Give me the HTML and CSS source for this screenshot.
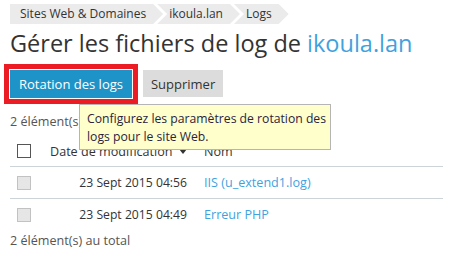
FILE: index.html
```html
<!DOCTYPE html>
<html lang="fr">
<head>
<meta charset="utf-8">
<title>Logs</title>
<link rel="stylesheet" href="styles.css">
</head>
<body>
<div class="page">
  <nav class="crumbs">
    <span class="crumb first">Sites Web &amp; Domaines</span>
    <span class="crumb">ikoula.lan</span>
    <span class="crumb">Logs</span>
  </nav>
  <h1 class="title">Gérer les fichiers de log de <a class="link">ikoula.lan</a></h1>
  <div class="toolbar">
    <button class="btn btn-primary">Rotation des logs</button>
    <button class="btn btn-default">Supprimer</button>
  </div>
  <div class="count">2 élément(s) au total</div>
  <div class="table">
    <div class="row head">
      <div class="cell cb"><span class="box box-head"></span></div>
      <div class="cell date-head">Date de modification <svg class="sort" width="8" height="5" viewBox="0 0 8 5"><path d="M0 0H8L4 5Z" fill="#333"/></svg></div>
      <div class="cell name-head">Nom</div>
    </div>
    <div class="row">
      <div class="cell cb"><span class="box"></span></div>
      <div class="cell date">23 Sept 2015 04:56</div>
      <div class="cell name"><a class="link">IIS (u_extend1.log)</a></div>
    </div>
    <div class="row last">
      <div class="cell cb"><span class="box"></span></div>
      <div class="cell date">23 Sept 2015 04:49</div>
      <div class="cell name"><a class="link">Erreur PHP</a></div>
    </div>
  </div>
  <div class="count footer">2 élément(s) au total</div>
  <div class="tooltip">Configurez les paramètres de rotation des<br>logs pour le site Web.</div>
</div>
</body>
</html>
```
FILE: styles.css
```css
html, body {
  margin: 0;
  padding: 0;
  background: #fff;
}
body {
  font-family: "Open Sans", "Liberation Sans", sans-serif;
  font-size: 12.6px;
  color: #333;
}
.page {
  position: relative;
  padding: 4px 10px 0 10px;
}
.crumbs {
  display: flex;
  height: 20px;
}
.crumb {
  display: flex;
  align-items: center;
  height: 20px;
  background: #ebebeb;
  color: #333;
  font-size: 12px;
  line-height: 20px;
  padding: 0 17px 0 12px;
  margin-left: -6px;
  clip-path: polygon(0 0, calc(100% - 10px) 0, 100% 50%, calc(100% - 10px) 100%, 0 100%, 10px 50%);
}
.crumb.first {
  margin-left: 0;
  padding-left: 10px;
  clip-path: polygon(0 0, calc(100% - 10px) 0, 100% 50%, calc(100% - 10px) 100%, 0 100%);
}
.title {
  margin: 3px 0 0 0;
  font-size: 23.5px;
  font-weight: normal;
  line-height: 32px;
  color: #333;
}
.link {
  color: #3fa2df;
  text-decoration: none;
}
.toolbar {
  display: flex;
  align-items: flex-start;
  gap: 10px;
  margin-top: 10px;
  margin-left: -1px;
}
.btn {
  font-family: "Open Sans", "Liberation Sans", sans-serif;
  font-size: 13px;
  border: 0;
  margin: 0;
  cursor: pointer;
}
.btn-primary {
  height: 30px;
  padding: 0 9px;
  background: #1e93c8;
  color: #fff;
  border: 1px solid #fff;
  outline: 5px solid #ec1c24;
}
.btn-default {
  height: 27px;
  margin-top: 1px;
  padding: 0 8px;
  background: #dcdcdc;
  color: #333;
}
.count {
  margin-top: 13px;
  line-height: 20px;
  color: #555;
}
.table {
  margin-top: 4px;
}
.row {
  display: grid;
  grid-template-columns: 30px 154px 1fr;
  align-items: center;
  height: 31px;
  border-bottom: 1px solid #ccd3d9;
}
.row.head {
  height: 30px;
}
.row.last {
  border-bottom: 0;
}
.cell.cb {
  padding-left: 7px;
  display: flex;
  align-items: center;
}
.box {
  display: block;
  width: 12px;
  height: 12px;
  background: #e6e6e6;
  border: 1px solid #c2c2c2;
}
.box.box-head {
  background: #fff;
  border: 1px solid #555;
}
.date-head {
  padding-left: 10px;
  white-space: nowrap;
}
.sort {
  margin-left: 3px;
  vertical-align: 2px;
}
.date {
  text-align: right;
  padding-right: 7px;
  white-space: nowrap;
  font-size: 12.2px;
}
.name-head, .name {
  padding-left: 10px;
  white-space: nowrap;
}
.footer {
  margin-top: 1px;
}
.tooltip {
  position: absolute;
  left: 79px;
  top: 104px;
  width: 236px;
  padding: 5px 7px 3px 7px;
  background: #ffffcc;
  border: 1px solid #b5b5b5;
  font-size: 12.2px;
  line-height: 18px;
  white-space: nowrap;
  color: #2a2440;
}
```
